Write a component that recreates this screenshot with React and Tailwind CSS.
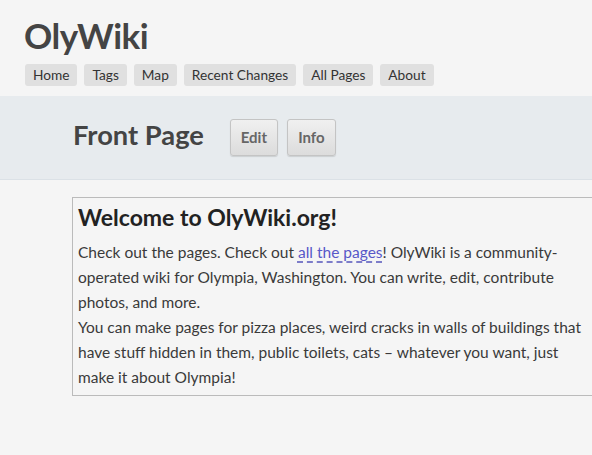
export default function App() {
  const nav = ["Home", "Tags", "Map", "Recent Changes", "All Pages", "About"];
  return (
    <div className="min-h-[455px] w-[592px] overflow-hidden bg-[#f5f5f5] text-[#444]" style={{ fontFamily: "Lato, 'Noto Sans', sans-serif" }}>
      <div className="px-[24px] pt-[15px]">
        <h1 className="text-[35px] font-bold leading-[40px] tracking-[-0.5px] text-[#444]">OlyWiki</h1>
        <div className="mt-[9px] flex gap-[7px] pl-[1px]">
          {nav.map((n) => (
            <span key={n} className="flex h-[22px] items-center rounded-[3px] bg-[#e0e0e0] px-[8px] text-[13.7px] text-[#333]">
              {n}
            </span>
          ))}
        </div>
      </div>
      <div className="mt-[10px] flex h-[84px] items-center border-b border-[#dbe1e6] bg-[#e7ebee] pb-[6px] pl-[73px]">
        <h2 className="mr-[26px] text-[27.3px] font-bold leading-none text-[#444]">Front Page</h2>
        <button className="mr-[9px] mt-[5px] h-[37px] w-[48px] rounded-[3px] border border-[#c4c4c4] bg-gradient-to-b from-[#f0f0f0] to-[#dcdcdc] text-[15px] font-bold text-[#666] shadow-[0_1px_1px_rgba(0,0,0,0.12)]">Edit</button>
        <button className="mt-[5px] h-[37px] w-[49px] rounded-[3px] border border-[#c4c4c4] bg-gradient-to-b from-[#f0f0f0] to-[#dcdcdc] text-[15px] font-bold text-[#666] shadow-[0_1px_1px_rgba(0,0,0,0.12)]">Info</button>
      </div>
      <div className="ml-[72px] mt-[17px] w-[540px] border border-[#bbb] px-[5px] pb-[5px] pt-[3px]">
        <h3 className="text-[23px] font-bold leading-[32px] text-[#222]">Welcome to OlyWiki.org!</h3>
        <p className="mt-[7px] w-[504px] text-[15.5px] leading-[25px] text-[#3a3a3a]">
          Check out the pages. Check out{" "}
          <a className="text-[#5858c8] underline decoration-[#5555bb] decoration-dashed underline-offset-[4px]">all the pages</a>! OlyWiki is a community-operated wiki for Olympia, Washington. You can write, edit, contribute photos, and more.
          <br />
          You can make pages for pizza places, weird cracks in walls of buildings that have stuff hidden in them, public toilets, cats – whatever you want, just make it about Olympia!
        </p>
      </div>
    </div>
  );
}
